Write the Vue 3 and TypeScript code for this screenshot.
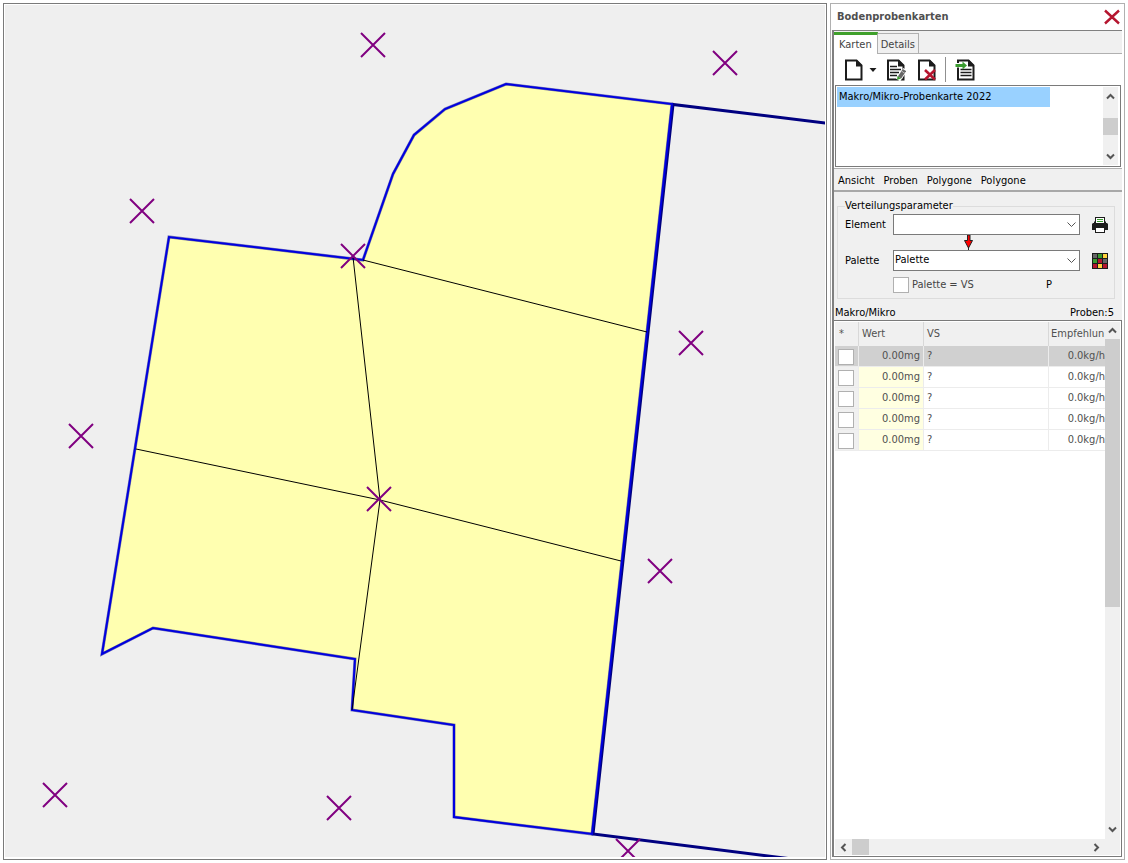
<script setup lang="ts">
import { ref } from 'vue'

interface Point {
  x: number
  y: number
}

interface Sample {
  id: number
  checked: boolean
  value: string
  vs: string
  advice: string
}

const markers: Point[] = [
  { x: 373, y: 45 },
  { x: 725, y: 63 },
  { x: 142, y: 211 },
  { x: 353, y: 256 },
  { x: 691, y: 343 },
  { x: 81, y: 436 },
  { x: 379, y: 499 },
  { x: 660, y: 571 },
  { x: 55, y: 795 },
  { x: 339, y: 808 },
  { x: 628, y: 851 },
]

const field =
  '506,84 672,104 592,834 454,817 454,725 352,710 355,659 153,628 102,654 169,237 363,260 393,174 414,135 445,109'

const menu = ['Ansicht', 'Proben', 'Polygone', 'Polygone']
const maps = ['Makro/Mikro-Probenkarte 2022']
const activeTab = ref('Karten')
const selectedRow = ref(1)
const element = ref('')
const palette = ref('Palette')
const paletteIsVs = ref(false)

const samples = ref<Sample[]>(
  [1, 2, 3, 4, 5].map((id) => ({ id, checked: false, value: '0.00mg', vs: '?', advice: '0.0kg/h' })),
)

const swatches = ['#666', '#3a9b2f', '#ffd23c', '#3a9b2f', '#b5152f', '#666', '#b5152f', '#ffd23c', '#b5152f']
</script>

<template>
  <div class="workspace">
    <main class="map">
      <svg class="canvas" viewBox="5 5 821 852" preserveAspectRatio="xMinYMin slice" role="img" aria-label="Feldkarte">
        <polyline class="boundary" points="830,123.5 673,104.5 593,834 800,860" />
        <polygon class="field" :points="field" />
        <polygon class="field-line" :points="field" />
        <path class="split" d="M363 260 647 332M353 257 380 500 352 710M136 449 380 500 621 561" />
        <path
          v-for="(m, i) in markers"
          :key="i"
          class="marker"
          :d="`M${m.x - 12} ${m.y - 12}l24 24m0 -24l-24 24`"
        />
      </svg>
    </main>

    <aside class="panel">
      <header class="title">
        <h1>Bodenprobenkarten</h1>
        <button class="close" aria-label="Schließen">
          <svg width="16" height="16" viewBox="0 0 16 16"><path d="M1 1.500 15 14.500M15 1.500 1 14.500" stroke="#b5152f" stroke-width="2.400" fill="none" /></svg>
        </button>
      </header>

      <div class="body">
        <nav class="tabs">
          <button
            v-for="t in ['Karten', 'Details']"
            :key="t"
            class="tab"
            :class="{ active: activeTab === t }"
            @click="activeTab = t"
          >{{ t }}</button>
        </nav>

        <section class="page">
          <div class="toolbar">
            <button class="tool new" aria-label="Neu">
              <svg width="20" height="22" viewBox="0 0 20 22">
                <path d="M2 1.500h10.500l5 5v14H2z" fill="#fff" stroke="#1c1c1c" stroke-width="2" />
                <path d="M12 1h1l5 5.500v1h-6z" fill="#1c1c1c" />
              </svg>
              <svg width="8" height="22" viewBox="0 0 8 22"><path d="M0.500 9h7L4 13z" fill="#1c1c1c" /></svg>
            </button>
            <button class="tool edit" aria-label="Bearbeiten">
              <svg width="20" height="22" viewBox="0 0 20 22">
                <path d="M2 1.500h10.500l5 5v14H2z" fill="#fff" stroke="#1c1c1c" stroke-width="2" />
                <path d="M12 1h1l5 5.500v1h-6z" fill="#1c1c1c" />
                <path d="M4 7.500h7M4 10.500h11M4 13.500h9M4 16.500h7" stroke="#1c1c1c" stroke-width="1.500" />
                <path d="M12 21 19.500 10.500" stroke="#fff" stroke-width="5" />
                <path d="M13.500 18.500 18.500 11" stroke="#666" stroke-width="4" />
                <path d="m11.500 17 3.500 2.500-4 1.500z" fill="#3a9b2f" />
                <path d="m15.500 12 3.500 2.500" stroke="#bbb" />
              </svg>
            </button>
            <button class="tool remove" aria-label="Löschen">
              <svg width="20" height="22" viewBox="0 0 20 22">
                <path d="M2 1.500h10.500l5 5v14H2z" fill="#fff" stroke="#1c1c1c" stroke-width="2" />
                <path d="M12 1h1l5 5.500v1h-6z" fill="#1c1c1c" />
                <path d="m8 11 10 9.500M18 11 8 20.500" stroke="#b5152f" stroke-width="2.600" />
              </svg>
            </button>
            <span class="divider"></span>
            <button class="tool import" aria-label="Importieren">
              <svg width="20" height="22" viewBox="0 0 20 22">
                <path d="M3 1.500h10.500l5 5v14H3z" fill="#fff" stroke="#1c1c1c" stroke-width="2" />
                <path d="M13 1h1l5 5.500v1h-6z" fill="#1c1c1c" />
                <path d="M5.500 10.500h11M5.500 13.500h11M5.500 16.500h11" stroke="#1c1c1c" stroke-width="1.500" />
                <path d="M1 4h6.500v4.500H1z" fill="#fff" />
                <path d="M0.500 5h7V2.500l4.500 4-4.500 4V8h-7z" fill="#3a9b2f" />
              </svg>
            </button>
          </div>

          <div class="maplist">
            <ul>
              <li v-for="m in maps" :key="m">{{ m }}</li>
            </ul>
            <div class="scroll small">
              <svg class="chevron" viewBox="0 0 9 9"><path d="M1 6.500 4.500 3 8 6.500" /></svg>
              <span class="thumb"></span>
              <svg class="chevron" viewBox="0 0 9 9"><path d="M1 2.500 4.500 6 8 2.500" /></svg>
            </div>
          </div>
        </section>

        <nav class="menu">
          <button v-for="(m, i) in menu" :key="i">{{ m }}</button>
        </nav>

        <fieldset class="params">
          <legend>Verteilungsparameter</legend>
          <label for="element">Element</label>
          <div class="combo">
            <select id="element" v-model="element">
              <option value=""></option>
            </select>
            <svg viewBox="0 0 9 9"><path d="M0.500 2.500 4.500 6.500 8.500 2.500" /></svg>
          </div>
          <button class="action" aria-label="Drucken">
            <svg width="16" height="16" viewBox="0 0 16 16">
              <path d="M3 0h10v6H3z" fill="#1c1c1c" />
              <path d="M4 1h8v5H4z" fill="#fff" />
              <path d="M5 2.500h6M5 4.500h6" stroke="#3a9b2f" />
              <path d="M1 6h1V4.500h1V6h10V4.500h1V6h1l1 1v6H0V7z" fill="#1c1c1c" />
              <path d="M3 10h10v6H3z" fill="#1c1c1c" />
              <path d="M4 11h8v4H4z" fill="#fff" />
            </svg>
          </button>
          <svg class="arrow" width="10" height="15" viewBox="0 0 10 15">
            <path d="M3.500 0v5.500H.500l4 7.500 4-7.500H6V0z" fill="#f00" stroke="#222" />
            <path d="M4.500 12v3" stroke="#222" />
          </svg>
          <label for="palette">Palette</label>
          <div class="combo">
            <select id="palette" v-model="palette">
              <option>Palette</option>
            </select>
            <svg viewBox="0 0 9 9"><path d="M0.500 2.500 4.500 6.500 8.500 2.500" /></svg>
          </div>
          <button class="action" aria-label="Palette bearbeiten">
            <svg width="16" height="16" viewBox="0 0 16 16">
              <path d="M0 0h16v16H0z" fill="#1c1c1c" />
              <rect
                v-for="(c, i) in swatches"
                :key="i"
                :x="1 + (i % 3) * 5"
                :y="1 + Math.floor(i / 3) * 5"
                width="4"
                height="4"
                :fill="c"
              />
            </svg>
          </button>
          <div class="options">
            <input id="vs" v-model="paletteIsVs" type="checkbox" />
            <label for="vs">Palette = VS</label>
            <span>P</span>
          </div>
        </fieldset>

        <div class="summary"><span>Makro/Mikro</span><span>Proben:5</span></div>

        <div class="grid">
          <div class="view">
            <table>
              <colgroup>
                <col class="c-check" />
                <col class="c-value" />
                <col class="c-vs" />
                <col />
              </colgroup>
              <thead>
                <tr><th>*</th><th>Wert</th><th>VS</th><th>Empfehlun</th></tr>
              </thead>
              <tbody>
                <tr v-for="s in samples" :key="s.id" :class="{ selected: s.id === selectedRow }" @click="selectedRow = s.id">
                  <td class="check"><input v-model="s.checked" type="checkbox" :aria-label="`Probe ${s.id}`" /></td>
                  <td class="value">{{ s.value }}</td>
                  <td>{{ s.vs }}</td>
                  <td class="advice">{{ s.advice }}</td>
                </tr>
              </tbody>
            </table>
          </div>
          <div class="scroll tall">
            <svg class="chevron" viewBox="0 0 9 9"><path d="M1 6.500 4.500 3 8 6.500" /></svg>
            <span class="thumb"></span>
            <svg class="chevron" viewBox="0 0 9 9"><path d="M1 2.500 4.500 6 8 2.500" /></svg>
          </div>
          <div class="scroll wide">
            <svg class="chevron" viewBox="0 0 9 9"><path d="M6.500 1 3 4.500 6.500 8" /></svg>
            <span class="thumb"></span>
            <svg class="chevron" viewBox="0 0 9 9"><path d="M2.500 1 6 4.500 2.500 8" /></svg>
          </div>
        </div>
      </div>
    </aside>
  </div>
</template>

<style>
body {
  background: #fff;
}
</style>

<style scoped>
* {
  box-sizing: border-box;
}
.workspace {
  display: grid;
  grid-template-columns: minmax(0, 1fr) 295px;
  gap: 3px;
  height: 100vh;
  padding: 3px;
  font: 11px/14px 'DejaVu Sans Condensed', 'Noto Sans', sans-serif;
  color: #000;
}
button,
select {
  font: inherit;
  color: inherit;
}
button {
  padding: 0;
  border: 0;
  background: none;
}
svg {
  display: block;
}
.map {
  min-height: 0;
  padding: 1px 1px 2px;
  border: 1px solid #7a7a7a;
  background: #fff;
}
.canvas {
  width: 100%;
  height: 100%;
  background: #efefef;
}
.boundary {
  fill: none;
  stroke: #000080;
  stroke-width: 3;
}
.field {
  fill: #ffffb0;
  stroke: #000080;
  stroke-opacity: 0.5;
  stroke-width: 3;
}
.field-line {
  fill: none;
  stroke: #0000e0;
  stroke-width: 2;
}
.split {
  fill: none;
  stroke: #000;
}
.marker {
  fill: none;
  stroke: #800080;
  stroke-width: 2;
}
.panel {
  display: flex;
  flex-direction: column;
  min-height: 0;
  border: 1px solid #b0b0b0;
  padding: 0 2px 2px 1px;
  background: #fff;
}
.title {
  display: flex;
  flex: none;
  align-items: center;
  justify-content: space-between;
  height: 26px;
  padding: 0 2px 0 5px;
}
h1 {
  margin: 0;
  font-size: 11px;
  color: #505050;
}
.body {
  display: flex;
  flex: 1;
  flex-direction: column;
  min-height: 0;
  border-top: 1px solid #808080;
  border-left: 2px solid #808080;
  background: #f0f0f0;
}
.tabs {
  display: flex;
  flex: none;
  align-items: flex-end;
  height: 23px;
  border-bottom: 1px solid #b0b0b0;
}
.tab {
  height: 20px;
  padding: 2px 3px 0;
  border: 1px solid #b0b0b0;
  border-width: 1px 1px 0 0;
  color: #444;
}
.tab.active {
  height: 22px;
  margin-bottom: -1px;
  padding: 0 5px;
  border-top: 3px solid #3fa02b;
  background: #fff;
}
.page {
  flex: none;
  padding: 0 1px 1px;
  border-bottom: 1px solid #b0b0b0;
  background: #fff;
}
.toolbar {
  display: flex;
  align-items: center;
  height: 31px;
  padding-left: 9px;
}
.tool {
  display: flex;
}
.new {
  gap: 5px;
  margin-right: 9px;
}
.edit {
  margin-right: 11px;
}
.divider {
  width: 1px;
  height: 25px;
  margin: 0 9px 0 8px;
  background: #909090;
}
.maplist {
  display: flex;
  height: 82px;
  padding: 1px;
  border: 1px solid #7a7a7a;
}
ul {
  flex: 1;
  margin: 0;
  padding: 0;
  list-style: none;
}
li {
  width: 80%;
  height: 20px;
  padding-left: 2px;
  line-height: 20px;
  background: #99d1ff;
}
.scroll {
  display: flex;
  flex-direction: column;
  align-items: center;
  justify-content: space-between;
  background: #f0f0f0;
}
.chevron {
  flex: none;
  width: 9px;
  height: 9px;
  fill: none;
  stroke: #555;
  stroke-width: 2;
}
.thumb {
  background: #cdcdcd;
}
.small {
  width: 15px;
  margin-right: 1px;
  padding: 5px 0 4px;
}
.small .thumb {
  width: 100%;
  height: 17px;
}
.menu {
  display: flex;
  flex: none;
  gap: 9px;
  height: 23px;
  padding: 2px 4px 0;
  border-bottom: 2px solid #a8a8a8;
}
.params {
  display: grid;
  flex: none;
  grid-template-columns: 48px minmax(0, 1fr) 34px;
  grid-template-rows: 21px 15px 21px 27px;
  align-items: center;
  margin: 7px 7px 0 3px;
  padding: 1px 0 0 7px;
  border: 1px solid #dcdcdc;
}
legend {
  padding: 0;
}
.combo {
  display: grid;
  align-items: center;
}
.combo > * {
  grid-area: 1 / 1;
}
.combo select {
  width: 100%;
  height: 21px;
  padding: 0 1px 1px;
  border: 1px solid #7a7a7a;
  border-radius: 0;
  background: #fff;
  appearance: none;
}
.combo svg {
  justify-self: end;
  width: 9px;
  height: 9px;
  margin-right: 4px;
  fill: none;
  stroke: #555;
  pointer-events: none;
}
.action {
  margin-left: 12px;
  justify-self: start;
}
.arrow {
  grid-column: 2;
  margin-left: 71px;
}
.arrow + label {
  grid-column: 1;
}
.options {
  display: grid;
  grid-column: 2 / 4;
  grid-template-columns: 19px 1fr 68px;
  align-items: center;
  color: #444;
}
.options span {
  color: #000;
}
input[type='checkbox'] {
  display: block;
  width: 16px;
  height: 16px;
  margin: 0;
  border: 1px solid #b0b0b0;
  background: #fff;
  appearance: none;
}
input[type='checkbox']:checked {
  background: #3fa02b;
}
.summary {
  display: flex;
  flex: none;
  justify-content: space-between;
  padding: 7px 8px 0 1px;
}
.grid {
  display: grid;
  flex: 1;
  grid-template-columns: minmax(0, 1fr) 15px;
  grid-template-rows: minmax(0, 1fr) 16px;
  min-height: 0;
  padding: 1px;
  border: 1px solid #7a7a7a;
  border-left: 0;
  background: #fff;
}
.view {
  overflow: hidden;
}
table {
  width: 100%;
  border-collapse: separate;
  border-spacing: 0;
  table-layout: fixed;
  color: #505050;
}
.c-check {
  width: 24px;
}
.c-value {
  width: 65px;
}
.c-vs {
  width: 125px;
}
th {
  height: 24px;
  padding: 0 3px 1px;
  border-right: 1px solid #d8d8d8;
  background: #f0f0f0;
  font-weight: normal;
  text-align: left;
}
th:first-child {
  padding-left: 4px;
}
th:last-child {
  padding: 0 0 1px 2px;
  border-right: 0;
}
td {
  height: 21px;
  padding: 0 3px;
  border-right: 1px solid #ececec;
  border-bottom: 1px solid #ececec;
}
td.check {
  padding: 3px 3px 1px;
  background: #f0f0f0;
}
td.value {
  background: #ffffe1;
  text-align: right;
}
td.advice {
  padding-right: 0;
  border-right: 0;
  text-align: right;
}
.selected td,
.selected td.check,
.selected td.value {
  background: #d0d0d0;
}
.tall {
  grid-row: 1 / 3;
  grid-column: 2;
  padding: 4px 0 21px;
}
.tall .thumb {
  width: 100%;
  height: 268px;
  margin: 4px 0 auto;
}
.wide {
  flex-direction: row;
  padding: 0 4px;
}
.wide .thumb {
  width: 17px;
  height: 100%;
  margin: 0 auto 0 4px;
}
</style>
